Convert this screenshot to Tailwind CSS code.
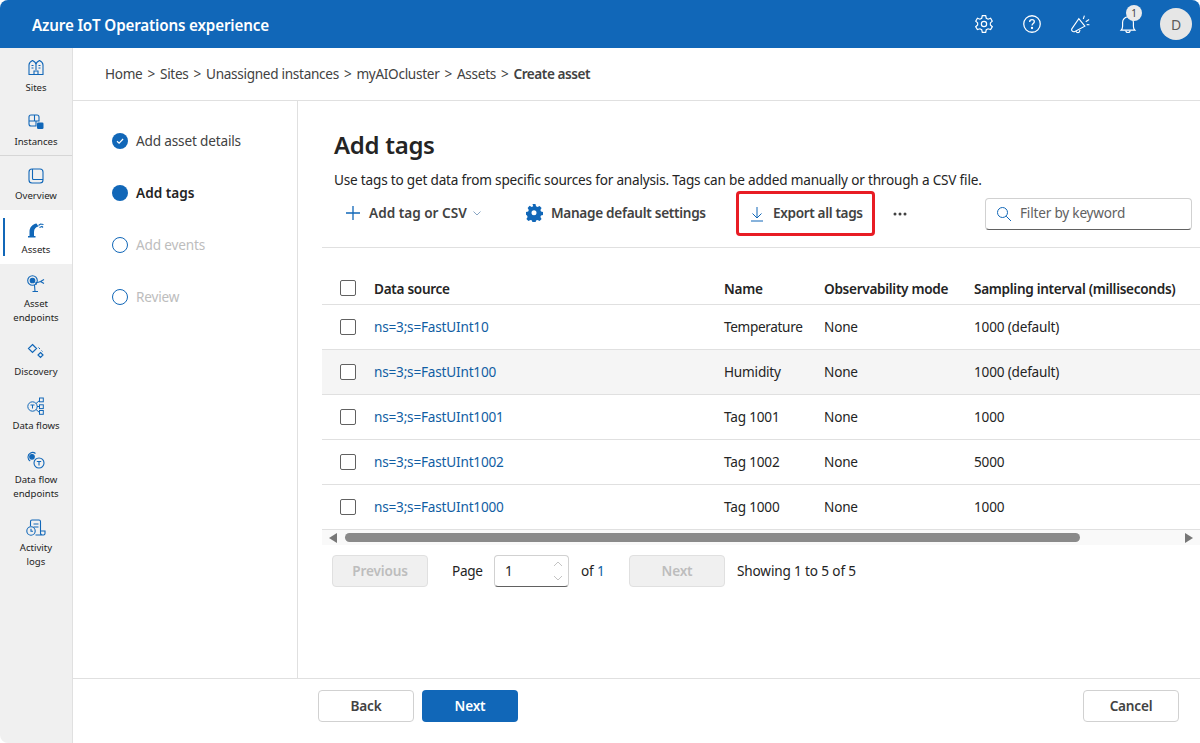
<!DOCTYPE html>
<html><head><meta charset="utf-8"><script src="https://cdn.jsdelivr.net/npm/@tailwindcss/browser@4"></script></head>
<body class="bg-white">
<div class="w-[1200px] h-[743px] overflow-hidden flex flex-col font-['Noto_Sans',sans-serif] text-[#242424] text-[13.6px] rounded-lg bg-white">
<header class="h-12 shrink-0 bg-[#1167b8] flex items-center text-white">
  <div class="ml-8 pt-[3px] text-[15.2px] font-semibold tracking-[-0.16px]">Azure IoT Operations experience</div>
  <div class="ml-auto flex items-center">
    <div class="w-12 h-12 flex items-center justify-center"><svg class="w-[18px] h-[18px]" viewBox="2.500 1.700 15 15" fill="none" stroke="white" stroke-width="1"><path d="M8.600 2.200h2.800l.5 2.200 1.500.8 2.100-.8 1.400 2.400-1.600 1.500v1.700l1.600 1.500-1.400 2.400-2.100-.7-1.500.8-.5 2.200H8.600l-.5-2.200-1.500-.8-2.100.7-1.400-2.400 1.600-1.500V8.300L3.100 6.800l1.400-2.400 2.100.8 1.500-.8z"/><circle cx="10" cy="9.200" r="2.200"/></svg></div>
    <div class="w-12 h-12 flex items-center justify-center"><svg class="w-[18px] h-[18px]" viewBox="1.500 1.500 17 17" fill="none" stroke="white" stroke-width="1.200"><circle cx="10" cy="10" r="7.800"/><path d="M7.800 8c0-1.300 1-2.100 2.200-2.100s2.200.8 2.200 2c0 1.600-2.200 1.700-2.200 3.400"/><circle cx="10" cy="13.800" r=".5" fill="white"/></svg></div>
    <div class="w-12 h-12 flex items-center justify-center"><svg class="w-[19px] h-[19px]" viewBox="1.500 1.200 17 17" fill="none" stroke="white" stroke-width="1"><path d="M2.200 13.600 8.500 4.400l5.400 6.800-9.300 4.900c-1.400.5-3-.8-2.400-2.500z"/><path d="M6 15.600c.3 1.300 1.800 1.700 2.800 1l.8-2 M12.500 4.800l1-3 M14.700 7.200l3-1.900 M15.500 9.800l2.500.1"/></svg></div>
    <div class="w-12 h-12 flex items-center justify-center">
      <div class="relative w-[18px] h-[18px] mt-[2px]">
        <svg class="w-[18px] h-[18px]" viewBox="2.500 2 15 17" fill="none" stroke="white" stroke-width="1.100"><path d="M3.500 15.300c1-1 1.400-2 1.400-3.600V8a5.100 5.100 0 0 1 10.200 0v3.700c0 1.600.4 2.600 1.400 3.600z"/><path d="M8 15.600c0 2.600 4 2.600 4 0"/></svg>
        <span class="absolute -top-[11px] left-[7px] w-4 h-4 rounded-full bg-[#ebebeb] text-[#424242] text-[10px] flex items-center justify-center">1</span>
      </div>
    </div>
    <div class="w-12 h-12 flex items-center justify-center"><div class="w-8 h-8 rounded-full bg-[#e6e6e6] text-[#5c5c5c] text-[14px] flex items-center justify-center">D</div></div>
  </div>
</header>
<div class="flex-1 flex min-h-0">
  <nav class="w-[73px] shrink-0 bg-[#f0f0f0] border-r border-[#e0e0e0] flex flex-col items-stretch text-[9.6px] leading-[14px] text-center text-[#242424]">
    <a class="h-[54px] pt-[11px] flex flex-col items-center">
      <svg class="w-[18px] h-[18px] mb-[4px]" viewBox="0 0 18 18" fill="none" stroke="#1167b8" stroke-width="1.100"><path d="M2 15.500V6c0-1.500 1.500-3.500 3.500-4.500C7.500 2.500 9 4 9 5.500 9 4 10.500 2.500 12.500 1.500c2 1 3.500 3 3.500 4.500v9.500z M9 5.500V11"/><path d="M4.500 6.500h2M4.500 9h2M11.500 6.500h2M11.500 9h2M7 15.500V12h4v3.500"/></svg>
      <span>Sites</span></a>
    <a class="h-[54px] pt-[11px] flex flex-col items-center border-b border-[#d6d6d6]">
      <svg class="w-[18px] h-[18px] mb-[4px]" viewBox="0 0 18 18" fill="none" stroke="#1167b8" stroke-width="1.100"><path d="M2 4a2 2 0 0 1 2-2h6a2 2 0 0 1 2 2v4H9v5H4a2 2 0 0 1-2-2z M2 8h7 M7.500 2v6"/><rect x="10" y="9.500" width="6.500" height="6.500" rx="1.300" fill="#1167b8" stroke="none"/></svg>
      <span>Instances</span></a>
    <a class="h-[54px] pt-[11px] flex flex-col items-center">
      <svg class="w-[18px] h-[18px] mb-[4px]" viewBox="0 0 18 18" fill="none" stroke="#1167b8" stroke-width="1.100"><rect x="2" y="2" width="14" height="14" rx="3"/><path d="M5.500 2v9.500a1 1 0 0 0 1 1H16"/></svg>
      <span>Overview</span></a>
    <a class="relative h-[54px] pt-[11px] flex flex-col items-center bg-white">
      <span class="absolute left-[3px] top-2 w-[2px] h-[38px] bg-[#1167b8]"></span>
      <svg class="w-[18px] h-[18px] mb-[4px]" viewBox="0 0 18 18" fill="#1167b8"><path d="M1 16.500V15h1.500v-4.500c0-4 3-7.500 7-8l2 3c-2.500.5-4.500 2.300-4.500 5.500V15h1.500v1.500z"/><path d="M11.500 4.500l2-1.500 3 .5M12.500 6.500l2.500-1 1 1" stroke="#1167b8" fill="none" stroke-width="1.100"/></svg>
      <span>Assets</span></a>
    <a class="h-[68px] pt-[11px] flex flex-col items-center">
      <svg class="w-[18px] h-[18px] mb-[4px]" viewBox="0 0 18 18" fill="none" stroke="#1167b8" stroke-width="1.100"><circle cx="5.500" cy="5.500" r="4.800"/><circle cx="5.500" cy="5.500" r="2.300" fill="#1167b8"/><path d="M7.500 10 8 16.500M11 16.500H5.500M9 10V7.500c2 0 3.500-.5 4.500-1l3.500-2M13.500 6.500l3.500 2"/></svg>
      <span>Asset<br>endpoints</span></a>
    <a class="h-[54px] pt-[11px] flex flex-col items-center">
      <svg class="w-[18px] h-[18px] mb-[4px]" viewBox="0 0 18 18" fill="none" stroke="#1167b8" stroke-width="1.200"><path d="M5.500 1.500 9.500 5.500 5.500 9.500 1.500 5.500z M13.500 9.500l2.500 2.500-2.500 2.500-2.500-2.500z"/><path d="M11.500 4.500l1.500 1.500M14.500 7.500l1 1" stroke-width="1"/></svg>
      <span>Discovery</span></a>
    <a class="h-[54px] pt-[11px] flex flex-col items-center">
      <svg class="w-[18px] h-[18px] mb-[4px]" viewBox="0 0 18 18" fill="none" stroke="#1167b8" stroke-width="1"><circle cx="5.500" cy="9.500" r="4.700"/><path d="M3.500 8h4M5.500 8v3.500M10 9.500h2.500M9 6.500l3.500-3M9 12.500l3.500 3"/><rect x="12.500" y="1" width="3.800" height="3.800"/><rect x="12.500" y="7.800" width="3.800" height="3.800"/><rect x="12.500" y="13.500" width="3.800" height="3.800"/></svg>
      <span>Data flows</span></a>
    <a class="h-[68px] pt-[11px] flex flex-col items-center">
      <svg class="w-[18px] h-[18px] mb-[4px]" viewBox="0 0 18 18" fill="none" stroke="#1167b8" stroke-width="1.100"><path d="M8.500 2.500A4.600 4.600 0 0 0 1 6.200c0 1.700.9 3 2.200 3.800"/><circle cx="5" cy="5.800" r="2.300" fill="#1167b8"/><circle cx="12" cy="12" r="5"/><path d="M9.800 10.500h4.400M12 10.500v4"/></svg>
      <span>Data flow<br>endpoints</span></a>
    <a class="h-[68px] pt-[11px] flex flex-col items-center">
      <svg class="w-[20px] h-[18px] mb-[4px]" viewBox="0 0 20 18" fill="none" stroke="#1167b8" stroke-width="1.100"><path d="M4.500 7V2.500A1.500 1.500 0 0 1 6 1h7a1.500 1.500 0 0 1 1.500 1.500V14a2 2 0 0 0 2 2h1a1.500 1.500 0 0 0 1.500-1.500V12h-4M16.500 16H9.500"/><path d="M7.500 5h5M7.500 8h5"/><circle cx="5" cy="12" r="4.200"/><path d="M5 9.800V12.300h2"/></svg>
      <span>Activity<br>logs</span></a>
  </nav>
  <div class="flex-1 flex flex-col min-w-0">
    <div class="h-[53px] shrink-0 border-b border-[#e0e0e0] pl-8 flex items-center text-[#424242] gap-[5px] tracking-[-0.3px]">
      <span>Home</span><span>&gt;</span><span>Sites</span><span>&gt;</span><span>Unassigned instances</span><span>&gt;</span><span>myAIOcluster</span><span>&gt;</span><span>Assets</span><span>&gt;</span><span class="font-semibold tracking-[-0.45px]">Create asset</span>
    </div>
    <div class="flex-1 flex min-h-0">
      <aside class="w-[225px] shrink-0 border-r border-[#e0e0e0] pl-[39px] pt-[14px] tracking-[-0.17px]">
        <div class="h-[52px] flex items-center gap-2 text-[#424242]">
          <svg class="w-4 h-4 shrink-0" viewBox="0 0 16 16"><circle cx="8" cy="8" r="8" fill="#1167b8"/><path d="M5 8.200l2.100 2 4-4.200" fill="none" stroke="white" stroke-width="1.200"/></svg>
          <span>Add asset details</span></div>
        <div class="h-[52px] flex items-center gap-2 font-semibold tracking-normal"><span class="w-4 h-4 rounded-full bg-[#1167b8] shrink-0"></span><span>Add tags</span></div>
        <div class="h-[52px] flex items-center gap-2 text-[#bdbdbd]"><span class="w-4 h-4 rounded-full border-[1.5px] border-[#1167b8] shrink-0"></span><span>Add events</span></div>
        <div class="h-[52px] flex items-center gap-2 text-[#bdbdbd]"><span class="w-4 h-4 rounded-full border-[1.5px] border-[#1167b8] shrink-0"></span><span>Review</span></div>
      </aside>
      <main class="flex-1 min-w-0 pl-6 overflow-hidden">
        <h1 class="pl-3 mt-[26px] text-[24px] leading-[36px] font-semibold tracking-[-0.3px]">Add tags</h1>
        <p class="pl-3 mt-[7px] leading-5 tracking-[-0.2px]">Use tags to get data from specific sources for analysis. Tags can be added manually or through a CSV file.</p>
        <div class="mt-[1px] h-[45px] flex items-center font-semibold text-[#424242]">
          <div class="ml-[23px] w-[180px] flex items-center">
            <svg class="w-4 h-4 mr-2" viewBox="0 0 16 16" fill="none" stroke="#1167b8" stroke-width="1.300"><path d="M8 1v14M1 8h14"/></svg>
            <span>Add tag or CSV</span>
            <svg class="w-2 h-2 ml-[6px]" viewBox="0 0 8 8" fill="none" stroke="#6b8fb5" stroke-width=".8"><path d="M.5 2.500 4 6l3.500-3.500"/></svg>
          </div>
          <div class="w-[211px] flex items-center tracking-[-0.3px]">
            <svg class="w-[18px] h-[18px] mr-2" viewBox="0 0 18 18" fill="#1167b8"><path fill-rule="evenodd" d="M7.500 1h3l.5 2.300 1.500.7 2.100-1.100 2 2.100-1.200 2 .6 1.500 2.200.6v2.800l-2.200.6-.6 1.500 1.200 2-2 2.100-2.100-1.200-1.500.7-.5 2.300h-3l-.5-2.300-1.500-.7-2.100 1.200-2-2.100 1.200-2-.6-1.500L1 11.800V9l2.200-.6.6-1.500-1.200-2 2-2.100 2.100 1.100L8.200 3.300z M9 7.200a2.500 2.500 0 1 0 0 5 2.500 2.500 0 0 0 0-5z" transform="translate(0 -1)"/></svg>
            <span>Manage default settings</span>
          </div>
          <div class="w-[139px] h-[45px] border-[3px] border-[#e81c24] rounded-[4px] flex items-center pl-[11px] tracking-[-0.35px]">
            <svg class="w-[14px] h-[16px] mr-[9px]" viewBox="0 0 14 16" fill="none" stroke="#1167b8" stroke-width="1"><path d="M7 1v10.500M2.500 7.500 7 12l4.500-4.500M1 15h12"/></svg>
            <span>Export all tags</span>
          </div>
          <svg class="w-[14px] h-1 ml-[18px]" viewBox="0 0 14 4" fill="#424242"><circle cx="2" cy="2" r="1.500"/><circle cx="7" cy="2" r="1.500"/><circle cx="12" cy="2" r="1.500"/></svg>
          <div class="ml-[78px] w-[207px] h-8 shrink-0 border border-[#d1d1d1] border-b-[#616161] rounded-[4px] flex items-center pl-[10px] font-normal text-[#616161] bg-white tracking-[-0.2px]">
            <svg class="w-4 h-4 mr-2" viewBox="0 0 16 16" fill="none" stroke="#1167b8" stroke-width="1"><circle cx="6.500" cy="6.500" r="5"/><path d="M10.200 10.200 15 15"/></svg>
            <span>Filter by keyword</span>
          </div>
        </div>
        <div class="mt-[11px] border-t border-[#e0e0e0] pt-[26px]">
          <div class="grid grid-cols-[52px_350px_100px_150px_1fr] items-center h-[31px] border-b border-[#e0e0e0] font-semibold tracking-[-0.3px]">
            <span class="ml-[18px] -mt-[2px] w-4 h-4 border border-[#616161] rounded-[2px] bg-white"></span><span>Data source</span><span>Name</span><span>Observability mode</span><span class="whitespace-nowrap">Sampling interval (milliseconds)</span>
          </div>
          <div class="grid grid-cols-[52px_350px_100px_150px_1fr] items-center h-[45px] border-b border-[#e0e0e0] tracking-[-0.2px]">
            <span class="ml-[18px] w-4 h-4 border border-[#616161] rounded-[2px] bg-white"></span><span class="text-[#115ea3]">ns=3;s=FastUInt10</span><span class="tracking-[-0.35px]">Temperature</span><span>None</span><span>1000 (default)</span>
          </div>
          <div class="grid grid-cols-[52px_350px_100px_150px_1fr] items-center h-[45px] border-b border-[#e0e0e0] bg-[#f5f5f5] tracking-[-0.2px]">
            <span class="ml-[18px] w-4 h-4 border border-[#616161] rounded-[2px] bg-white"></span><span class="text-[#115ea3]">ns=3;s=FastUInt100</span><span>Humidity</span><span>None</span><span>1000 (default)</span>
          </div>
          <div class="grid grid-cols-[52px_350px_100px_150px_1fr] items-center h-[45px] border-b border-[#e0e0e0] tracking-[-0.2px]">
            <span class="ml-[18px] w-4 h-4 border border-[#616161] rounded-[2px] bg-white"></span><span class="text-[#115ea3]">ns=3;s=FastUInt1001</span><span>Tag 1001</span><span>None</span><span>1000</span>
          </div>
          <div class="grid grid-cols-[52px_350px_100px_150px_1fr] items-center h-[45px] border-b border-[#e0e0e0] tracking-[-0.2px]">
            <span class="ml-[18px] w-4 h-4 border border-[#616161] rounded-[2px] bg-white"></span><span class="text-[#115ea3]">ns=3;s=FastUInt1002</span><span>Tag 1002</span><span>None</span><span>5000</span>
          </div>
          <div class="grid grid-cols-[52px_350px_100px_150px_1fr] items-center h-[45px] border-b border-[#e0e0e0] tracking-[-0.2px]">
            <span class="ml-[18px] w-4 h-4 border border-[#616161] rounded-[2px] bg-white"></span><span class="text-[#115ea3]">ns=3;s=FastUInt1000</span><span>Tag 1000</span><span>None</span><span>1000</span>
          </div>
          <div class="h-[15px] bg-[#f9f9f9] flex items-center px-[7px]">
            <svg class="w-[8px] h-[10px]" viewBox="0 0 8 10" fill="#777"><path d="M8 0v10L0 5z"/></svg>
            <div class="ml-2 w-[735px] h-[9px] rounded-full bg-[#8a8a8a]"></div>
            <svg class="w-[8px] h-[10px] ml-auto" viewBox="0 0 8 10" fill="#777"><path d="M0 0v10l8-5z"/></svg>
          </div>
        </div>
        <div class="mt-[10px] ml-[10px] flex items-center h-8 tracking-[-0.15px]">
          <span class="w-24 h-8 rounded-[4px] border border-[#e0e0e0] bg-[#f0f0f0] text-[#bdbdbd] font-semibold flex items-center justify-center">Previous</span>
          <span class="ml-6 w-[30px] whitespace-nowrap tracking-[-0.3px]">Page</span>
          <div class="ml-3 w-[75px] h-8 border border-[#d1d1d1] border-b-[#616161] rounded-[4px] flex items-center justify-between pl-[10px] pr-1">
            <span>1</span>
            <svg class="w-3 h-6" viewBox="0 0 12 24" fill="none" stroke="#c4c4c4" stroke-width="1"><path d="M2 7l4-4 4 4M2 17l4 4 4-4"/></svg>
          </div>
          <span class="ml-3 w-6 whitespace-nowrap">of <span class="text-[#115ea3]">1</span></span>
          <span class="ml-6 w-24 h-8 rounded-[4px] border border-[#e0e0e0] bg-[#f0f0f0] text-[#bdbdbd] font-semibold flex items-center justify-center">Next</span>
          <span class="ml-3">Showing 1 to 5 of 5</span>
        </div>
      </main>
    </div>
    <footer class="h-[65px] shrink-0 border-t border-[#e0e0e0] flex items-center font-semibold pb-[10px] tracking-[-0.2px]">
      <button class="ml-[245px] w-24 h-8 rounded-[4px] border border-[#d1d1d1] text-[#424242]">Back</button>
      <button class="ml-2 w-24 h-8 rounded-[4px] bg-[#1167b8] text-white">Next</button>
      <button class="ml-auto mr-[21px] w-24 h-8 rounded-[4px] border border-[#d1d1d1] text-[#424242]">Cancel</button>
    </footer>
  </div>
</div>
</div>
</body></html>
